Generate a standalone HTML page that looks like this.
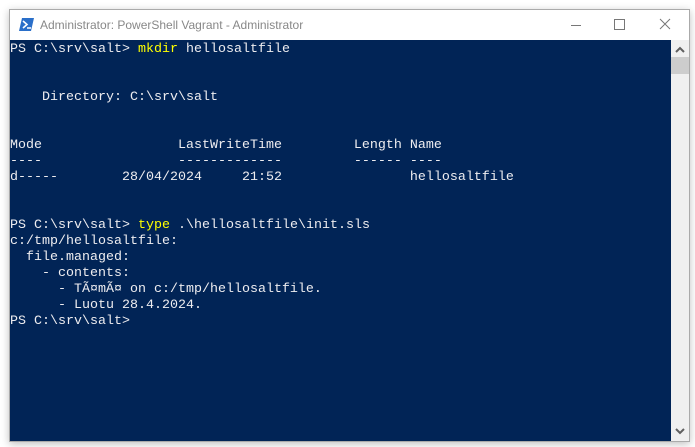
<!DOCTYPE html>
<html><head><style>
body{margin:0;width:695px;height:447px;background:#fff;position:relative;overflow:hidden;font-family:"Liberation Sans",sans-serif}
.win{position:absolute;left:9px;top:9px;width:679px;height:431px;border:1px solid #aaa;box-shadow:0 2px 8px rgba(0,0,0,.25);background:#fff}
.title{position:absolute;left:0;top:0;width:679px;height:30px;background:#fff}
.title span{position:absolute;left:30px;top:8px;font-size:12px;color:#888}
.con{position:absolute;left:0;top:30px;width:661px;height:401px;background:#012456}
pre{margin:0;position:absolute;left:0;top:2px;font-family:"Liberation Mono",monospace;font-size:13.33px;line-height:16px;color:#eeedf0}
.y{color:#ffff00}
.sb{position:absolute;left:661px;top:30px;width:18px;height:401px;background:#f0f0f0}
</style></head><body>
<div class="win">
<div class="title">
<svg style="position:absolute;left:9px;top:8px" width="15" height="13"><polygon points="3,0 15,0 12,13 0,13" fill="#2a6fc9"/><polyline points="4,3 8,6.5 4,10" stroke="#fff" stroke-width="1.6" fill="none"/><line x1="8" y1="10" x2="12" y2="10" stroke="#fff" stroke-width="1.5"/></svg>
<span>Administrator: PowerShell Vagrant - Administrator</span>
<div style="position:absolute;left:561px;top:15px;width:10px;height:1px;background:#777"></div>
<div style="position:absolute;left:604px;top:9px;width:9px;height:9px;border:1px solid #777"></div>
<svg style="position:absolute;left:649px;top:8px" width="12" height="12"><path d="M1 1L11 11M11 1L1 11" stroke="#777" stroke-width="1"/></svg>
</div>
<div class="con"><pre>PS C:\srv\salt&gt; <span class="y">mkdir</span> hellosaltfile


    Directory: C:\srv\salt


Mode                 LastWriteTime         Length Name
----                 -------------         ------ ----
d-----        28/04/2024     21:52                hellosaltfile


PS C:\srv\salt&gt; <span class="y">type</span> .\hellosaltfile\init.sls
c:/tmp/hellosaltfile:
  file.managed:
    - contents:
      - TÃ¤mÃ¤ on c:/tmp/hellosaltfile.
      - Luotu 28.4.2024.
PS C:\srv\salt&gt;</pre></div>
<div class="sb">
<svg style="position:absolute;left:4px;top:6px" width="10" height="8"><path d="M1 6L5 2L9 6" stroke="#606060" stroke-width="2" fill="none"/></svg>
<div style="position:absolute;left:0;top:17px;width:18px;height:17px;background:#cdcdcd"></div>
<svg style="position:absolute;left:4px;top:387px" width="10" height="8"><path d="M1 2L5 6L9 2" stroke="#606060" stroke-width="2" fill="none"/></svg>
</div>
</div>
</body></html>
